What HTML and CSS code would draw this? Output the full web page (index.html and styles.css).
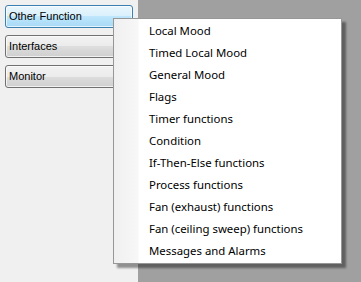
FILE: index.html
```html
<!DOCTYPE html>
<html lang="en">

<head>
  <meta charset="UTF-8">
  <meta name="viewport" content="width=device-width, initial-scale=1.0">
  <title>Functions</title>
  <link rel="stylesheet" href="styles.css">
</head>

<body>
  <div class="window">
    <div class="side-panel">
      <button class="side-btn active">Other Function</button>
      <button class="side-btn">Interfaces</button>
      <button class="side-btn">Monitor</button>
    </div>
    <div class="work-area"></div>

    <ul class="context-menu">
      <li>Local Mood</li>
      <li>Timed Local Mood</li>
      <li>General Mood</li>
      <li>Flags</li>
      <li>Timer functions</li>
      <li>Condition</li>
      <li>If-Then-Else functions</li>
      <li>Process functions</li>
      <li>Fan (exhaust) functions</li>
      <li>Fan (ceiling sweep) functions</li>
      <li>Messages and Alarms</li>
    </ul>
  </div>
</body>

</html>
```

FILE: styles.css
```css
/* Estilo geral */
* {
  margin: 0;
  padding: 0;
  box-sizing: border-box;
}

body {
  width: 361px;
  height: 282px;
  overflow: hidden;
}

.window {
  position: relative;
  display: flex;
  width: 361px;
  height: 282px;
}

.side-panel {
  width: 138px;
  background-color: #f0f0f0;
  display: flex;
  flex-direction: column;
  gap: 7px;
  padding: 5px 0 0 5px;
}

.work-area {
  flex: 1;
  background-color: #a0a0a0;
}

.side-btn {
  width: 128px;
  height: 23px;
  border: 1px solid #707070;
  border-radius: 3px;
  background: linear-gradient(to bottom, #f2f2f2 0%, #ebebeb 50%, #dddddd 50%, #cfcfcf 100%);
  font-family: "Liberation Sans", Arial, sans-serif;
  font-size: 11px;
  color: #000;
  text-align: left;
  padding: 0 0 1px 3px;
  box-shadow: inset 0 0 0 1px rgba(255, 255, 255, 0.7);
}

.side-btn.active {
  border-color: #3c7fb1;
  background: linear-gradient(to bottom, #eaf6fd 0%, #d9f0fc 50%, #bee6fd 50%, #a7d9f5 100%);
}

/* Menu */
.context-menu {
  position: absolute;
  left: 113px;
  top: 18px;
  width: 229px;
  list-style: none;
  border: 1px solid #979797;
  padding: 1px;
  background: linear-gradient(to right, #f0f0f0 0px, #f7f7f7 24px, #fff 25px, #fff 100%);
  box-shadow: 4px 4px 2px rgba(0, 0, 0, 0.4);
  font-family: "Noto Sans", "Open Sans", sans-serif;
  font-size: 11.4px;
  color: #000;
}

.context-menu li {
  height: 22px;
  line-height: 22px;
  padding-left: 34px;
  white-space: nowrap;
}
```
